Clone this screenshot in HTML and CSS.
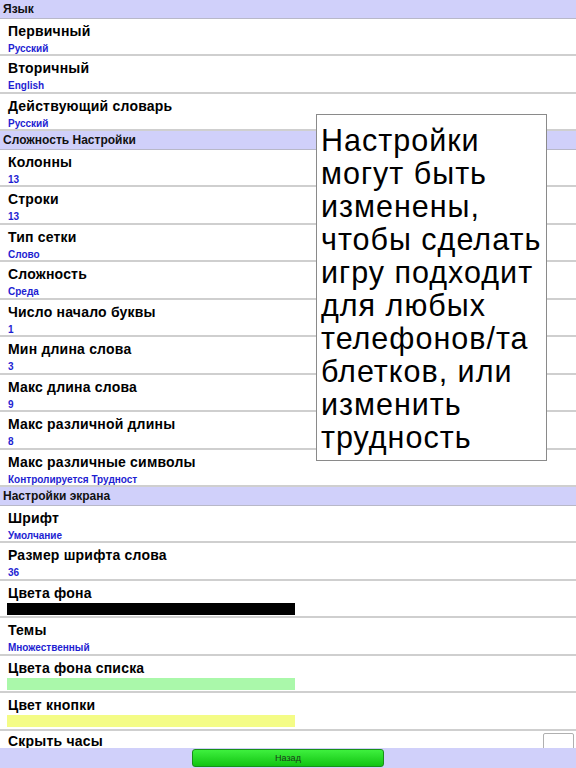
FILE: index.html
```html
<!DOCTYPE html>
<html lang="ru">
<head>
<meta charset="utf-8">
<link rel="stylesheet" href="styles.css">
</head>
<body>
<div class="screen">
  <div class="list">
    <div class="section">Язык</div>
    <div class="row"><div class="title">Первичный</div><div class="value">Русский</div></div>
    <div class="row"><div class="title">Вторичный</div><div class="value">English</div></div>
    <div class="row"><div class="title">Действующий словарь</div><div class="value">Русский</div></div>
    <div class="section">Сложность Настройки</div>
    <div class="row"><div class="title">Колонны</div><div class="value">13</div></div>
    <div class="row"><div class="title">Строки</div><div class="value">13</div></div>
    <div class="row"><div class="title">Тип сетки</div><div class="value">Слово</div></div>
    <div class="row"><div class="title">Сложность</div><div class="value">Среда</div></div>
    <div class="row"><div class="title">Число начало буквы</div><div class="value">1</div></div>
    <div class="row"><div class="title">Мин длина слова</div><div class="value">3</div></div>
    <div class="row"><div class="title">Макс длина слова</div><div class="value">9</div></div>
    <div class="row"><div class="title">Макс различной длины</div><div class="value">8</div></div>
    <div class="row"><div class="title">Макс различные символы</div><div class="value">Контролируется Трудност</div></div>
    <div class="section">Настройки экрана</div>
    <div class="row"><div class="title">Шрифт</div><div class="value">Умолчание</div></div>
    <div class="row"><div class="title">Размер шрифта слова</div><div class="value">36</div></div>
    <div class="row"><div class="title">Цвета фона</div><div class="swatch swatch-black"></div></div>
    <div class="row"><div class="title">Темы</div><div class="value">Множественный</div></div>
    <div class="row"><div class="title">Цвета фона списка</div><div class="swatch swatch-green"></div></div>
    <div class="row"><div class="title">Цвет кнопки</div><div class="swatch swatch-yellow"></div></div>
    <div class="row row-check"><div class="title">Скрыть часы</div><div class="checkbox"></div></div>
  </div>
  <div class="bottombar">
    <button class="back">Назад</button>
  </div>
  <div class="tip"><span class="tl">Настройки</span><span class="tl">могут быть</span><span class="tl">изменены,</span><span class="tl">чтобы сделать</span><span class="tl">игру подходит</span><span class="tl">для любых</span><span class="tl">телефонов/та</span><span class="tl">блетков, или</span><span class="tl">изменить</span><span class="tl">трудность</span></div>
</div>
</body>
</html>
```
FILE: styles.css
```css
html, body {
  margin: 0;
  padding: 0;
  background: #ffffff;
}
body {
  font-family: "Liberation Sans", Arial, sans-serif;
  color: #000;
}
.screen {
  position: relative;
  width: 576px;
  height: 768px;
  overflow: hidden;
  display: flex;
  flex-direction: column;
}
.list {
  height: 748px;
  overflow: hidden;
  flex: none;
}
.section {
  box-sizing: border-box;
  height: 18.5px;
  background: #d0d0fa;
  border-bottom: 1px solid #b8b8c8;
  padding-left: 3px;
  font-size: 12px;
  font-weight: bold;
  line-height: 18px;
  color: #111;
}
.row {
  box-sizing: border-box;
  height: 37.5px;
  border-bottom: 2px solid #cfcfcf;
  padding: 3px 8px 0 8px;
}
.title {
  font-size: 14px;
  font-weight: bold;
  line-height: 19px;
  color: #000;
  letter-spacing: 0.2px;
}
.value {
  margin-top: 1px;
  font-size: 10px;
  font-weight: bold;
  line-height: 14px;
  color: #1e1ed2;
}
.swatch {
  width: 288px;
  height: 12px;
  margin-top: 0;
  margin-left: -1px;
}
.swatch-black { background: #000000; }
.swatch-green { background: #aaf8aa; }
.swatch-yellow { background: #f4fc86; }
.row-check {
  display: flex;
  justify-content: space-between;
  align-items: flex-start;
  padding-top: 1px;
  padding-right: 2px;
}
.checkbox {
  width: 29px;
  height: 22px;
  border: 1px solid #b0b0b0;
  border-radius: 2px;
  background: #fff;
  margin-top: 1px;
}
.bottombar {
  flex: 1;
  background: #d0d0fa;
  display: flex;
  align-items: center;
  padding-left: 192px;
}
.back {
  width: 192px;
  height: 18px;
  border: 1px solid #189018;
  border-radius: 3px;
  background: linear-gradient(#3ef03e, #12c412);
  font-family: "Liberation Sans", Arial, sans-serif;
  font-size: 9px;
  color: #1a3a1a;
  padding: 0;
}
.tip {
  position: absolute;
  left: 316px;
  top: 114px;
  box-sizing: border-box;
  width: 231px;
  height: 347px;
  background: #fff;
  border: 1px solid #8a8a8a;
  padding: 9px 4px 0 4px;
  font-size: 30.5px;
  line-height: 33px;
  letter-spacing: 1px;
  color: #000;
}
.tl {
  display: block;
  white-space: nowrap;
}
```
